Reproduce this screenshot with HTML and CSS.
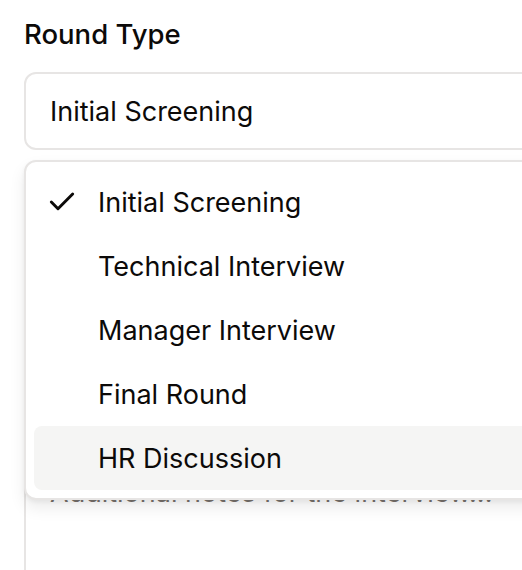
FILE: index.html
```html
<!DOCTYPE html>
<html>
<head>
<meta charset="utf-8">
<link rel="stylesheet" href="styles.css">
</head>
<body>
<div class="form">
  <div class="field">
    <label class="label">Round Type</label>
    <div class="select-wrap">
      <button class="trigger">Initial Screening</button>
      <div class="menu">
        <div class="item selected">
          <svg class="check" viewBox="0 0 24 24" fill="none" stroke="currentColor" stroke-width="2.2" stroke-linecap="round" stroke-linejoin="round"><polyline points="20 6 9 17 4 12"/></svg>
          <span>Initial Screening</span>
        </div>
        <div class="item"><span>Technical Interview</span></div>
        <div class="item"><span>Manager Interview</span></div>
        <div class="item"><span>Final Round</span></div>
        <div class="item active"><span>HR Discussion</span></div>
      </div>
    </div>
  </div>
  <div class="field notes">
    <textarea class="textarea" placeholder="Additional notes for the interview..."></textarea>
  </div>
</div>
</body>
</html>
```
FILE: styles.css
```css
* { box-sizing: border-box; }
html, body { margin: 0; padding: 0; background: #fff; }
body {
  font-family: Inter, "Noto Sans", sans-serif;
  color: #1c1917;
  overflow: hidden;
  width: 522px;
  height: 570px;
}
.form {
  padding: 16px 0 0 24px;
  width: 620px;
  display: flex;
  flex-direction: column;
  gap: 24px;
}
.field { display: flex; flex-direction: column; gap: 20px; }
.label {
  font-size: 27.5px;
  font-weight: 500;
  line-height: 36px;
  color: #0c0a09;
}
.select-wrap { position: relative; }
.trigger {
  display: flex;
  align-items: center;
  width: 100%;
  height: 78px;
  padding: 0 24px;
  border: 2px solid #e7e5e4;
  border-radius: 12px;
  background: #fff;
  font-family: inherit;
  font-size: 27px;
  color: #0c0a09;
  text-align: left;
}
.menu {
  position: absolute;
  left: 0;
  right: 0;
  top: 88px;
  padding: 8px;
  background: #fff;
  border: 2px solid #e7e5e4;
  border-radius: 12px;
  box-shadow: 0 8px 16px rgba(0,0,0,0.08), 0 2px 4px rgba(0,0,0,0.05);
  z-index: 2;
}
.item {
  position: relative;
  height: 64px;
  display: flex;
  align-items: center;
  padding-left: 64px;
  font-size: 27px;
  border-radius: 8px;
  color: #0c0a09;
}
.item.active { background: #f5f5f4; }
.check {
  position: absolute;
  left: 12px;
  top: 16px;
  width: 32px;
  height: 32px;
  color: #0c0a09;
}
.notes { margin-top: 281px; }
.textarea {
  display: block;
  width: 100%;
  height: 220px;
  padding: 16px 24px;
  border: 2px solid #e7e5e4;
  border-radius: 12px;
  font-family: inherit;
  font-size: 27px;
  line-height: 40px;
  resize: none;
}
.textarea::placeholder { color: #78716c; }
```
